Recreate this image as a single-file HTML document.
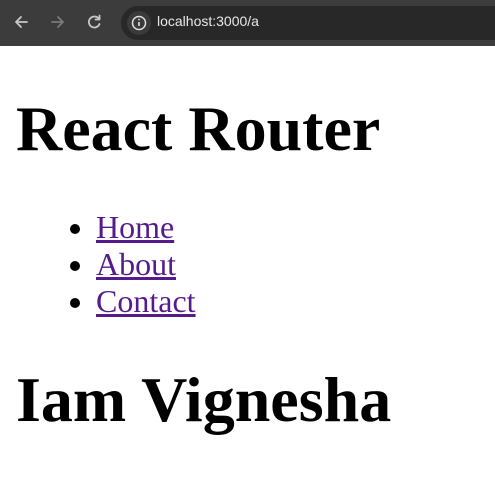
<!DOCTYPE html>
<html><head><style>
html,body{margin:0;padding:0;background:#fff}
.bar{position:absolute;left:0;top:0;width:495px;height:46px;background:#3c3c3c}
.pill{position:absolute;left:121px;top:6px;width:400px;height:34px;border-radius:17px;background:#282828}
.info{position:absolute;left:127px;top:11px;width:24px;height:24px;border-radius:12px;background:#3a3a3a}
.url{position:absolute;left:157px;top:13px;font:14px "Liberation Sans",sans-serif;color:#e8e8e8}
.page{position:absolute;top:49px;left:0;width:495px;height:442px;overflow:hidden}
.c{margin:16px;font-family:"Liberation Serif",serif;font-size:32px;color:#000}
h1{font-size:64px;margin:43px 0}
ul{margin:43px 0;padding-left:80px}
a{color:#551a8b}
</style></head><body>
<div class="bar">
<svg width="495" height="46" style="position:absolute;left:0;top:0">
<g fill="none" stroke-width="1.8" stroke-linecap="round" stroke-linejoin="round">
<path d="M27 22H16M21 17l-5 5 5 5" stroke="#c8c8c8"/>
<path d="M52 22h11M58 17l5 5-5 5" stroke="#7a7a7a"/>
<path d="M99 19a5.5 5.5 0 1 0 .5 5" stroke="#c8c8c8"/>
<path d="M99.5 15.5v4h-4" stroke="#c8c8c8"/>
</g></svg>
<div class="pill"></div><div class="info"></div>
<svg width="495" height="46" style="position:absolute;left:0;top:0">
<circle cx="139" cy="23" r="6.5" fill="none" stroke="#e0e0e0" stroke-width="1.5"/>
<path d="M139 22v4" stroke="#e0e0e0" stroke-width="1.6"/><circle cx="139" cy="19.5" r="0.9" fill="#e0e0e0"/>
</svg>
<div class="url">localhost:3000/a</div>
</div>
<div class="page"><div class="c">
<h1>React Router</h1>
<ul><li><a href="#">Home</a></li><li><a href="#">About</a></li><li><a href="#">Contact</a></li></ul>
<h1>Iam Vignesha</h1>
</div></div>
</body></html>
